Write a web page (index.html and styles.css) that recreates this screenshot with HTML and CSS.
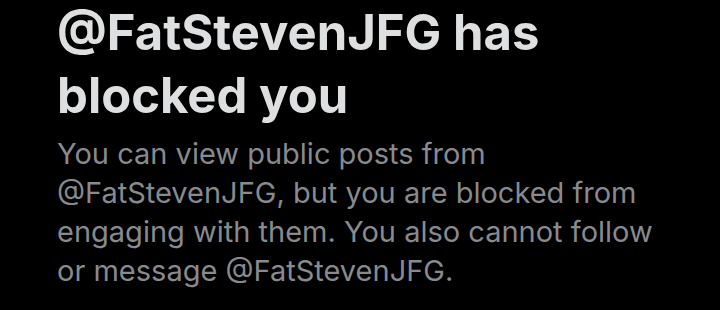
FILE: index.html
```html
<!DOCTYPE html>
<html>
<head>
<meta charset="utf-8">
<link rel="stylesheet" href="styles.css">
</head>
<body>
<main class="blocked">
  <h1 class="blocked-title">@FatStevenJFG has blocked you</h1>
  <p class="blocked-text">You can view public posts from @FatStevenJFG, but you are blocked from engaging with them. You also cannot follow or message @FatStevenJFG.</p>
</main>
</body>
</html>
```
FILE: styles.css
```css
html, body {
  margin: 0;
  padding: 0;
  background: #000;
  width: 720px;
  height: 310px;
  overflow: hidden;
}
.blocked {
  padding: 1px 0 0 57px;
  width: 612px;
  font-family: Inter, Roboto, "Liberation Sans", sans-serif;
}
.blocked-title {
  margin: 0;
  font-size: 49px;
  line-height: 63px;
  font-weight: 700;
  color: #dedfe0;
  width: 540px;
}
.blocked-text {
  margin: 7px 0 0;
  font-size: 29px;
  line-height: 39px;
  font-weight: 400;
  color: #878a8e;
}
```
